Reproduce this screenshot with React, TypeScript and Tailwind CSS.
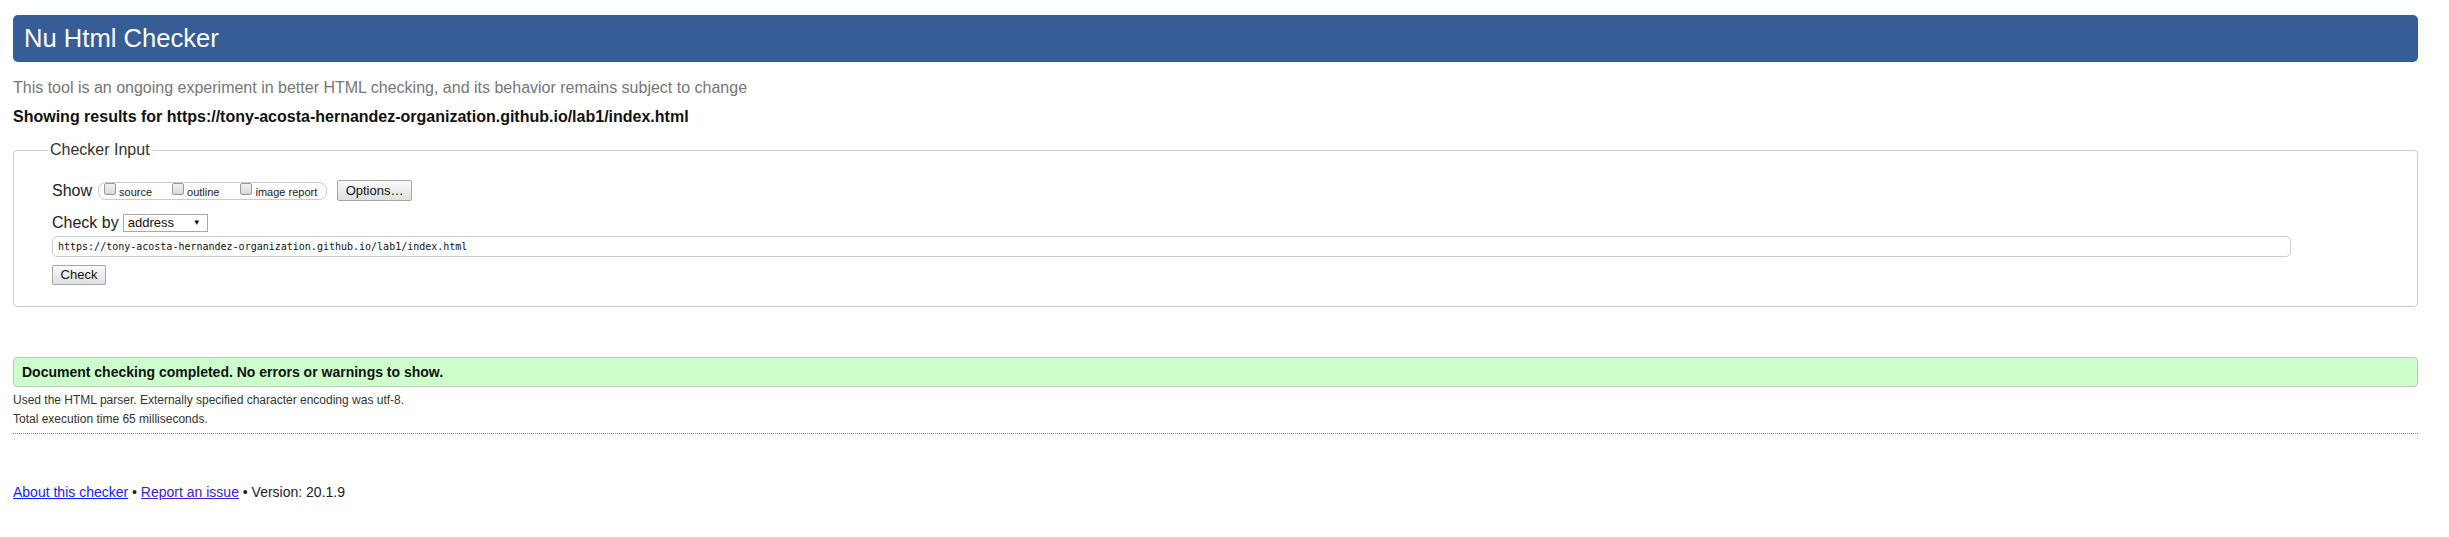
import React from "react";

const Box: React.FC = () => (
    <span className="mt-[0px] inline-block h-[12px] w-[12px] shrink-0 self-start rounded-[2px] border border-[#9a9a9a] bg-gradient-to-b from-[#f4f4f4] to-[#d8d8d8]" />
);

const ShowOption: React.FC<{ label: string; gap: string }> = ({ label, gap }) => (
    <span className={"flex h-full items-center " + gap}>
        <Box />
        <span className="ml-[3px] pt-[3px] text-[11px] leading-[13px] text-[#222]">{label}</span>
    </span>
);

export default function App() {
    return (
        <div className="min-h-[537px] bg-white pl-[13px] pr-[31px] pt-[15px] font-['Liberation_Sans',Arial,sans-serif] text-[#222]">
            <header className="flex h-[47px] items-center rounded-[5px] bg-[#365d95] pl-[11px] text-[25.6px] text-white">
                Nu Html Checker
            </header>

            <p className="mt-[17px] text-[16px] leading-[18px] text-[#777]">
                This tool is an ongoing experiment in better HTML checking, and its behavior remains subject to change
            </p>
            <p className="mt-[11px] text-[16px] font-bold leading-[18px] text-[#111]">
                Showing results for https://tony-acosta-hernandez-organization.github.io/lab1/index.html
            </p>

            <fieldset className="mt-[15px] rounded-[4px] border border-[#cccccc] pb-[21px] pl-[38px] pr-[10px]">
                <legend className="ml-[-4px] px-[2px] text-[16px] leading-[18px] text-[#333]">Checker Input</legend>

                <div className="mt-[21px] flex h-[21px] items-center">
                    <span className="text-[16px] leading-[19px] text-[#222]">Show</span>
                    <span className="ml-[6px] flex h-[18px] w-[229px] items-center rounded-[8px] border border-[#cccccc] pl-[5px]">
                        <ShowOption label="source" gap="" />
                        <ShowOption label="outline" gap="ml-[20px]" />
                        <ShowOption label="image report" gap="ml-[21px]" />
                    </span>
                    <button type="button" className="ml-[10px] h-[21px] w-[75px] rounded-[2px] border border-[#a6a6a6] bg-gradient-to-b from-[#fafafa] to-[#e0e0e0] text-[13px] leading-[19px] text-[#111]">
                        Options…
                    </button>
                </div>

                <div className="mt-[12px] flex h-[19px] items-center">
                    <span className="text-[16px] leading-[19px] text-[#222]">Check by</span>
                    <span className="ml-[4px] flex h-[18px] w-[85px] items-center justify-between border border-[#a9a9a9] bg-white pl-[4px] pr-[6px]">
                        <span className="text-[13px] leading-[16px] text-[#111]">address</span>
                        <span className="text-[8px] leading-[10px] text-[#111]">▼</span>
                    </span>
                </div>

                <div className="mt-[4px] flex h-[21px] w-[2239px] items-center rounded-[5px] border border-[#cccccc] pl-[5px] font-['DejaVu_Sans_Mono','Liberation_Mono',monospace] text-[10px] text-[#111]">
                    https://tony-acosta-hernandez-organization.github.io/lab1/index.html
                </div>

                <button type="button" className="mt-[8px] block h-[20px] w-[54px] rounded-[2px] border border-[#a6a6a6] bg-gradient-to-b from-[#fafafa] to-[#e0e0e0] text-[13px] leading-[18px] text-[#111]">
                    Check
                </button>
            </fieldset>

            <div className="mt-[50px] flex h-[30px] items-center rounded-[4px] border border-[#c4c4c4] bg-[#ccffcc] pl-[8px] text-[14px] font-bold text-[#111]">
                Document checking completed. No errors or warnings to show.
            </div>

            <p className="mt-[4px] text-[12px] leading-[19px] text-[#333]">Used the HTML parser. Externally specified character encoding was utf-8.</p>
            <p className="text-[12px] leading-[19px] text-[#333]">Total execution time 65 milliseconds.</p>

            <div className="mt-[4px] border-b border-dotted border-[#888]" />

            <p className="mt-[50px] text-[14px] leading-[16px] text-[#222]">
                <a href="#" className="text-[#1a1aff] underline">About this checker</a>
                {" • "}
                <a href="#" className="text-[#3d23d6] underline">Report an issue</a>
                {" • Version: 20.1.9"}
            </p>
        </div>
    );
}
